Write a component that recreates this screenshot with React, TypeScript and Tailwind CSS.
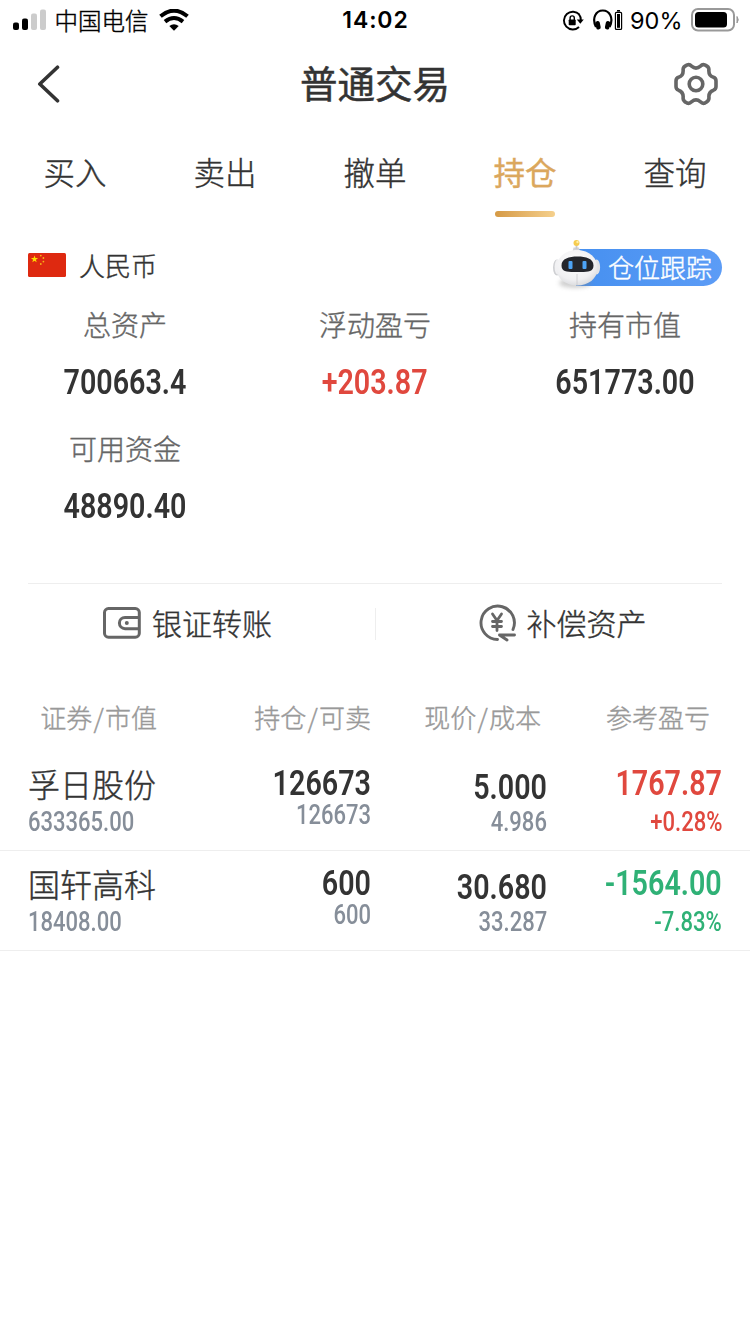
import React from "react";

type Align = "left" | "center" | "right";

const origins: Record<Align, string> = {
  left: "origin-left",
  center: "origin-center",
  right: "origin-right",
};

function Num({ children, small, align = "center", className = "" }: { children: string; small?: boolean; align?: Align; className?: string }) {
  const size = small ? "text-[27px] leading-[28px] scale-x-[0.815] font-medium" : "text-[35px] leading-[36px] scale-x-[0.82] font-semibold";
  return (
    <span className={`inline-block whitespace-nowrap font-[Roboto,sans-serif] [-webkit-text-stroke:0] ${size} ${origins[align]} ${className}`}>
      {children}
    </span>
  );
}

function StatusBar() {
  return (
    <div className="grid h-10 grid-cols-3 items-center text-black">
      <div className="flex items-center pl-[13px]">
        <svg className="-mt-[2px]" width="33" height="22" viewBox="0 0 33 22">
          <rect x="0" y="13.5" width="6" height="7.5" rx="2" fill="#000" />
          <rect x="9" y="9.5" width="6" height="11.5" rx="2" fill="#000" />
          <rect x="18" y="4.500" width="6" height="16.500" rx="2" fill="#ccc" />
          <rect x="27" y="0.500" width="6" height="20.500" rx="2" fill="#ccc" />
        </svg>
        <span className="ml-[8.500px] -mt-[1px] text-[23.5px] leading-10">中国电信</span>
        <svg className="-mt-[1px] ml-[10px]" width="30" height="22" viewBox="0 0 30 22">
          <path d="M1.500 7.300Q15-4 28.500 7.300" fill="none" stroke="#000" strokeWidth="4" />
          <path d="M6 12.600Q15 5.300 24 12.600" fill="none" stroke="#000" strokeWidth="4" />
          <path d="M10.300 17Q15 13.300 19.700 17L15 21.700Z" fill="#000" />
        </svg>
      </div>
      <div className="pl-[1px] text-center font-[Inter,sans-serif] text-[23px] font-semibold tracking-[0.900px] [-webkit-text-stroke:0]">14:02</div>
      <div className="flex items-center justify-end pr-[10px]">
        <svg className="-ml-[1px]" width="22" height="22" viewBox="0 0 22 22" fill="none" stroke="#000">
          <path d="M17.500 4.700A8.900 8.900 0 1 0 17 17" strokeWidth="1.900" />
          <path d="M17 4.300Q19 6.500 18.900 10.500" strokeWidth="1.900" />
          <path d="M14.800 9.500h7l-3.500 4.200z" fill="#000" stroke="none" />
          <rect x="6.700" y="9.400" width="7" height="5.800" rx="0.800" fill="#000" stroke="none" />
          <path d="M8.100 10V8a2.100 2.100 0 0 1 4.200 0V10" strokeWidth="1.400" />
        </svg>
        <svg className="-mt-[1px] ml-[9px]" width="30" height="22" viewBox="0 0 30 22">
          <path d="M3 18C-1.500 9 3 1.500 9.800 1.500S21 9 16.600 18" fill="none" stroke="#000" strokeWidth="2.200" />
          <rect x="2.700" y="12" width="4.500" height="8.500" rx="2" transform="rotate(-12 5 16)" />
          <rect x="12.400" y="12" width="4.500" height="8.500" rx="2" transform="rotate(12 14.600 16)" />
          <rect x="22.400" y="3.400" width="6.200" height="17" rx="1" fill="none" stroke="#000" strokeWidth="1.200" />
          <rect x="24" y="5" width="3" height="13.800" />
          <rect x="24" y="1" width="3" height="1.600" />
        </svg>
        <span className="ml-[7px] pt-[1px] font-[Inter,sans-serif] text-[23.500px] font-normal leading-10 [-webkit-text-stroke:0]">90%</span>
        <svg className="-mt-[1px] ml-[8.500px]" width="49" height="24" viewBox="0 0 49 24">
          <rect x="1" y="1" width="42" height="21.500" rx="6" fill="#fff" stroke="#999" strokeWidth="2" />
          <rect x="4" y="4" width="32" height="15.500" rx="3.500" />
          <path d="M46 8.500Q48.500 11.800 46 15z" fill="#999" stroke="#999" />
        </svg>
      </div>
    </div>
  );
}

function Header() {
  return (
    <div className="grid h-[88px] grid-cols-[150px_1fr_150px] items-center">
      <svg className="ml-[36px]" width="24" height="40" viewBox="0 0 24 40" fill="none" stroke="#333" strokeWidth="3.600" strokeLinecap="round" strokeLinejoin="round">
        <path d="M21.500 3.200L3.800 20L21.500 36.800" />
      </svg>
      <div className="pb-[5px] text-center text-[37.500px] leading-[56px] font-normal [-webkit-text-stroke:0.5px]">普通交易</div>
      <svg className="ml-[73px]" width="46" height="44" viewBox="0 0 46 44" fill="none" stroke="#666" strokeWidth="3.600" strokeLinejoin="round">
        <path d="M14 3Q16.500 1.800 18.500 4.200Q23 8 27.500 4.200Q29.500 1.800 32 3Q36 4.600 35.900 7.500C35.500 12 37.500 14.500 40.500 15.300Q43 16 43 19V24.500Q43 27.200 40.500 28.200C37 29.500 35.500 32.500 36 36Q36 39 32 41Q29.500 42 27.500 39.800Q23 36 18.500 39.800Q16.500 42 14 41Q10 39 10.100 36C10.500 32.500 9 29.500 5.500 28.200Q3 27.200 3 24.500V19Q3 16 5.500 15.300C8.500 14.500 10.500 12 10.100 7.500Q10 4.600 14 3Z" />
        <circle cx="23" cy="22" r="6.800" />
      </svg>
    </div>
  );
}

const tabs = ["买入", "卖出", "撤单", "持仓", "查询"];

function Tabs() {
  return (
    <div className="grid h-[90px] grid-cols-5 text-[31.500px]">
      {tabs.map((tab) => (
        <div key={tab} className={`flex flex-col items-center ${tab === "持仓" ? "font-normal text-[#dba75d]" : ""}`}>
          <span className="mt-[19px] leading-[48px]">{tab}</span>
          {tab === "持仓" && <span className="mt-[16px] h-[6px] w-[60px] rounded-[3px] bg-linear-to-r from-[#d59a45] to-[#f5d08c]" />}
        </div>
      ))}
    </div>
  );
}

function Flag() {
  return (
    <svg width="38" height="24" viewBox="0 0 38 24">
      <rect width="38" height="24" rx="1.500" fill="#de2910" />
      <path d="M6.500 2.600l.9 2.500h2.700L7.900 6.700l.8 2.600-2.200-1.600-2.200 1.600.8-2.600-2.200-1.600h2.700z" fill="#ffde00" />
      <g fill="#f8b416">
        <circle cx="12.800" cy="2.600" r="0.900" />
        <circle cx="15.400" cy="5" r="0.900" />
        <circle cx="15.400" cy="8.600" r="0.900" />
        <circle cx="12.800" cy="11" r="0.900" />
      </g>
    </svg>
  );
}

function Robot() {
  return (
    <svg className="absolute -top-[11px] -left-[25px]" width="52" height="54" viewBox="0 0 52 54">
      <defs>
        <radialGradient id="head" cx="0.450" cy="0.350" r="0.700">
          <stop offset="0" stopColor="#fff" />
          <stop offset="0.700" stopColor="#f0f0f2" />
          <stop offset="1" stopColor="#d6d7da" />
        </radialGradient>
        <filter id="shade" x="-30%" y="-60%" width="160%" height="220%">
          <feGaussianBlur stdDeviation="2" />
        </filter>
      </defs>
      <ellipse cx="24" cy="45" rx="16" ry="5" fill="#888" opacity="0.400" filter="url(#shade)" />
      <path d="M21.500 14l1-4.500h5.500l1 4.500z" fill="#d3d4d8" />
      <rect x="24.600" y="6" width="1.800" height="5" fill="#c8c9cd" />
      <circle cx="25.500" cy="5" r="3" fill="#f6cc4f" />
      <circle cx="26.500" cy="4" r="1.200" fill="#fff0a8" />
      <ellipse cx="6" cy="29.500" rx="4" ry="8" fill="#cfd0d3" />
      <ellipse cx="6.800" cy="29" rx="3.200" ry="7.500" fill="#f1f1f3" />
      <ellipse cx="45.500" cy="29" rx="3.600" ry="7.500" fill="#e2e3e6" />
      <path d="M26 12C37 12 46.500 19 46.500 30S37 47.500 26 47.500S5.500 41 5.500 30S15 12 26 12Z" fill="url(#head)" />
      <path d="M26 36v11" stroke="#c9c9cd" strokeWidth="0.800" />
      <path d="M10.500 27.500C10.500 20.500 18 18.500 26.500 18.500S42.500 20.500 42.500 27.500S36 34 26.500 34S10.500 34.500 10.500 27.500Z" fill="#24262c" />
      <rect x="17.500" y="23" width="4" height="8" rx="1" fill="#4da3f5" />
      <rect x="31.500" y="23" width="4" height="8" rx="1" fill="#4da3f5" />
    </svg>
  );
}

function Summary() {
  const items = [
    { label: "总资产", value: "700663.4" },
    { label: "浮动盈亏", value: "+203.87", color: "text-[#e0483e]" },
    { label: "持有市值", value: "651773.00" },
    { label: "可用资金", value: "48890.40" },
  ];
  return (
    <div>
      <div className="flex h-[78px] items-start justify-between pt-[31px] pr-7 pl-7">
        <div className="flex items-center">
          <span className="-mt-[1px] pb-[5px]"><Flag /></span>
          <span className="-mt-[1px] ml-[13px] pb-[4px] text-[26px] leading-[34px]">人民币</span>
        </div>
        <div className="relative flex h-[37px] w-[146px] items-center justify-end rounded-r-full bg-linear-to-r from-[#4690f0] to-[#5c9cf6] pr-[10px] pb-[1px] text-[26px] leading-[36px] text-white">
          仓位跟踪
          <Robot />
        </div>
      </div>
      <div className="grid h-[287px] grid-cols-3 grid-rows-[124px_124px]">
        {items.map((item) => (
          <div key={item.label} className="flex flex-col items-center pt-[8px]">
            <span className="text-[28px] leading-10 text-[#666]">{item.label}</span>
            <Num className={`mt-[21px] ${item.color ?? ""}`}>{item.value}</Num>
          </div>
        ))}
      </div>
    </div>
  );
}

function Actions() {
  return (
    <div className="mx-7 grid h-[80px] grid-cols-2 items-center border-t border-[#eee] text-[30px]">
      <div className="-mr-[1px] flex h-8 items-center justify-center border-r border-[#eee] pr-[28px] pb-[1px]">
        <svg width="38" height="32" viewBox="0 0 38 32" fill="none" stroke="#666" strokeWidth="3">
          <rect x="1.500" y="1.600" width="34.800" height="28.600" rx="4" />
          <path d="M36 10.500H22a5.600 5.600 0 0 0 0 11.200H36" />
          <circle cx="23.800" cy="16" r="2" fill="#666" stroke="none" />
        </svg>
        <span className="ml-[11px] pb-[2px]">银证转账</span>
      </div>
      <div className="flex h-8 items-center justify-center pl-[28px] pb-[2px]">
        <svg width="38" height="38" viewBox="0 0 38 38" fill="none" stroke="#666" strokeWidth="2.900" strokeLinecap="round">
          <path d="M34 25.500A16.700 16.700 0 1 0 18.500 35.500" />
          <path d="M35.500 31H20.500L28 36" strokeLinejoin="round" />
          <path d="M13.500 10l4.500 6.500L22.500 10M18 17v9.500M13.500 17.500h9M13.500 22.500h9" strokeWidth="2.800" />
        </svg>
        <span className="ml-[10px] pb-[1px]">补偿资产</span>
      </div>
    </div>
  );
}

const rows = [
  { name: "孚日股份", value: "633365.00", held: "126673", sellable: "126673", price: "5.000", cost: "4.986", profit: "1767.87", rate: "+0.28%", color: "text-[#e0483e]" },
  { name: "国轩高科", value: "18408.00", held: "600", sellable: "600", price: "30.680", cost: "33.287", profit: "-1564.00", rate: "-7.83%", color: "text-[#2fb176]" },
];

const columns = [
  ["证券", "市值"],
  ["持仓", "可卖"],
  ["现价", "成本"],
];

function Holdings() {
  return (
    <div className="pt-[23px]">
      <div className="grid h-[65px] grid-cols-[185px_186px_170px_1fr] items-center pb-[4px] text-right text-[26px] text-[#999]">
        {columns.map(([first, second], i) => (
          <span key={first} className={i === 0 ? "pr-[28px]" : ""}>
            {first}<span className="mx-[1.300px]">/</span>{second}
          </span>
        ))}
        <span className="pr-10">参考盈亏</span>
      </div>
      {rows.map((row) => (
        <div key={row.name} className="grid h-[100px] grid-cols-[185px_186px_176px_1fr] border-b border-[#eee] pr-7">
          <div className="flex flex-col items-start pt-[8px] pl-7">
            <span className="text-[32px] leading-[48px]">{row.name}</span>
            <Num small align="left" className="mt-[1px] text-[#868e99]">{row.value}</Num>
          </div>
          <div className="flex flex-col items-end pt-[15px]">
            <Num align="right">{row.held}</Num>
            <Num small align="right" className="-mt-[1px] text-[#868e99]">{row.sellable}</Num>
          </div>
          <div className="flex flex-col items-end pt-[19px]">
            <Num align="right">{row.price}</Num>
            <Num small align="right" className="mt-[2px] text-[#868e99]">{row.cost}</Num>
          </div>
          <div className={`flex flex-col items-end pt-[15px] ${row.color}`}>
            <Num align="right">{row.profit}</Num>
            <Num small align="right" className="mt-[6px]">{row.rate}</Num>
          </div>
        </div>
      ))}
    </div>
  );
}

export default function App() {
  return (
    <div className="min-h-[1334px] w-[750px] overflow-hidden bg-white font-['Noto_Sans_CJK_SC',sans-serif] font-light text-[#333] [-webkit-text-stroke:0.4px]">
      <StatusBar />
      <Header />
      <Tabs />
      <Summary />
      <Actions />
      <Holdings />
    </div>
  );
}
